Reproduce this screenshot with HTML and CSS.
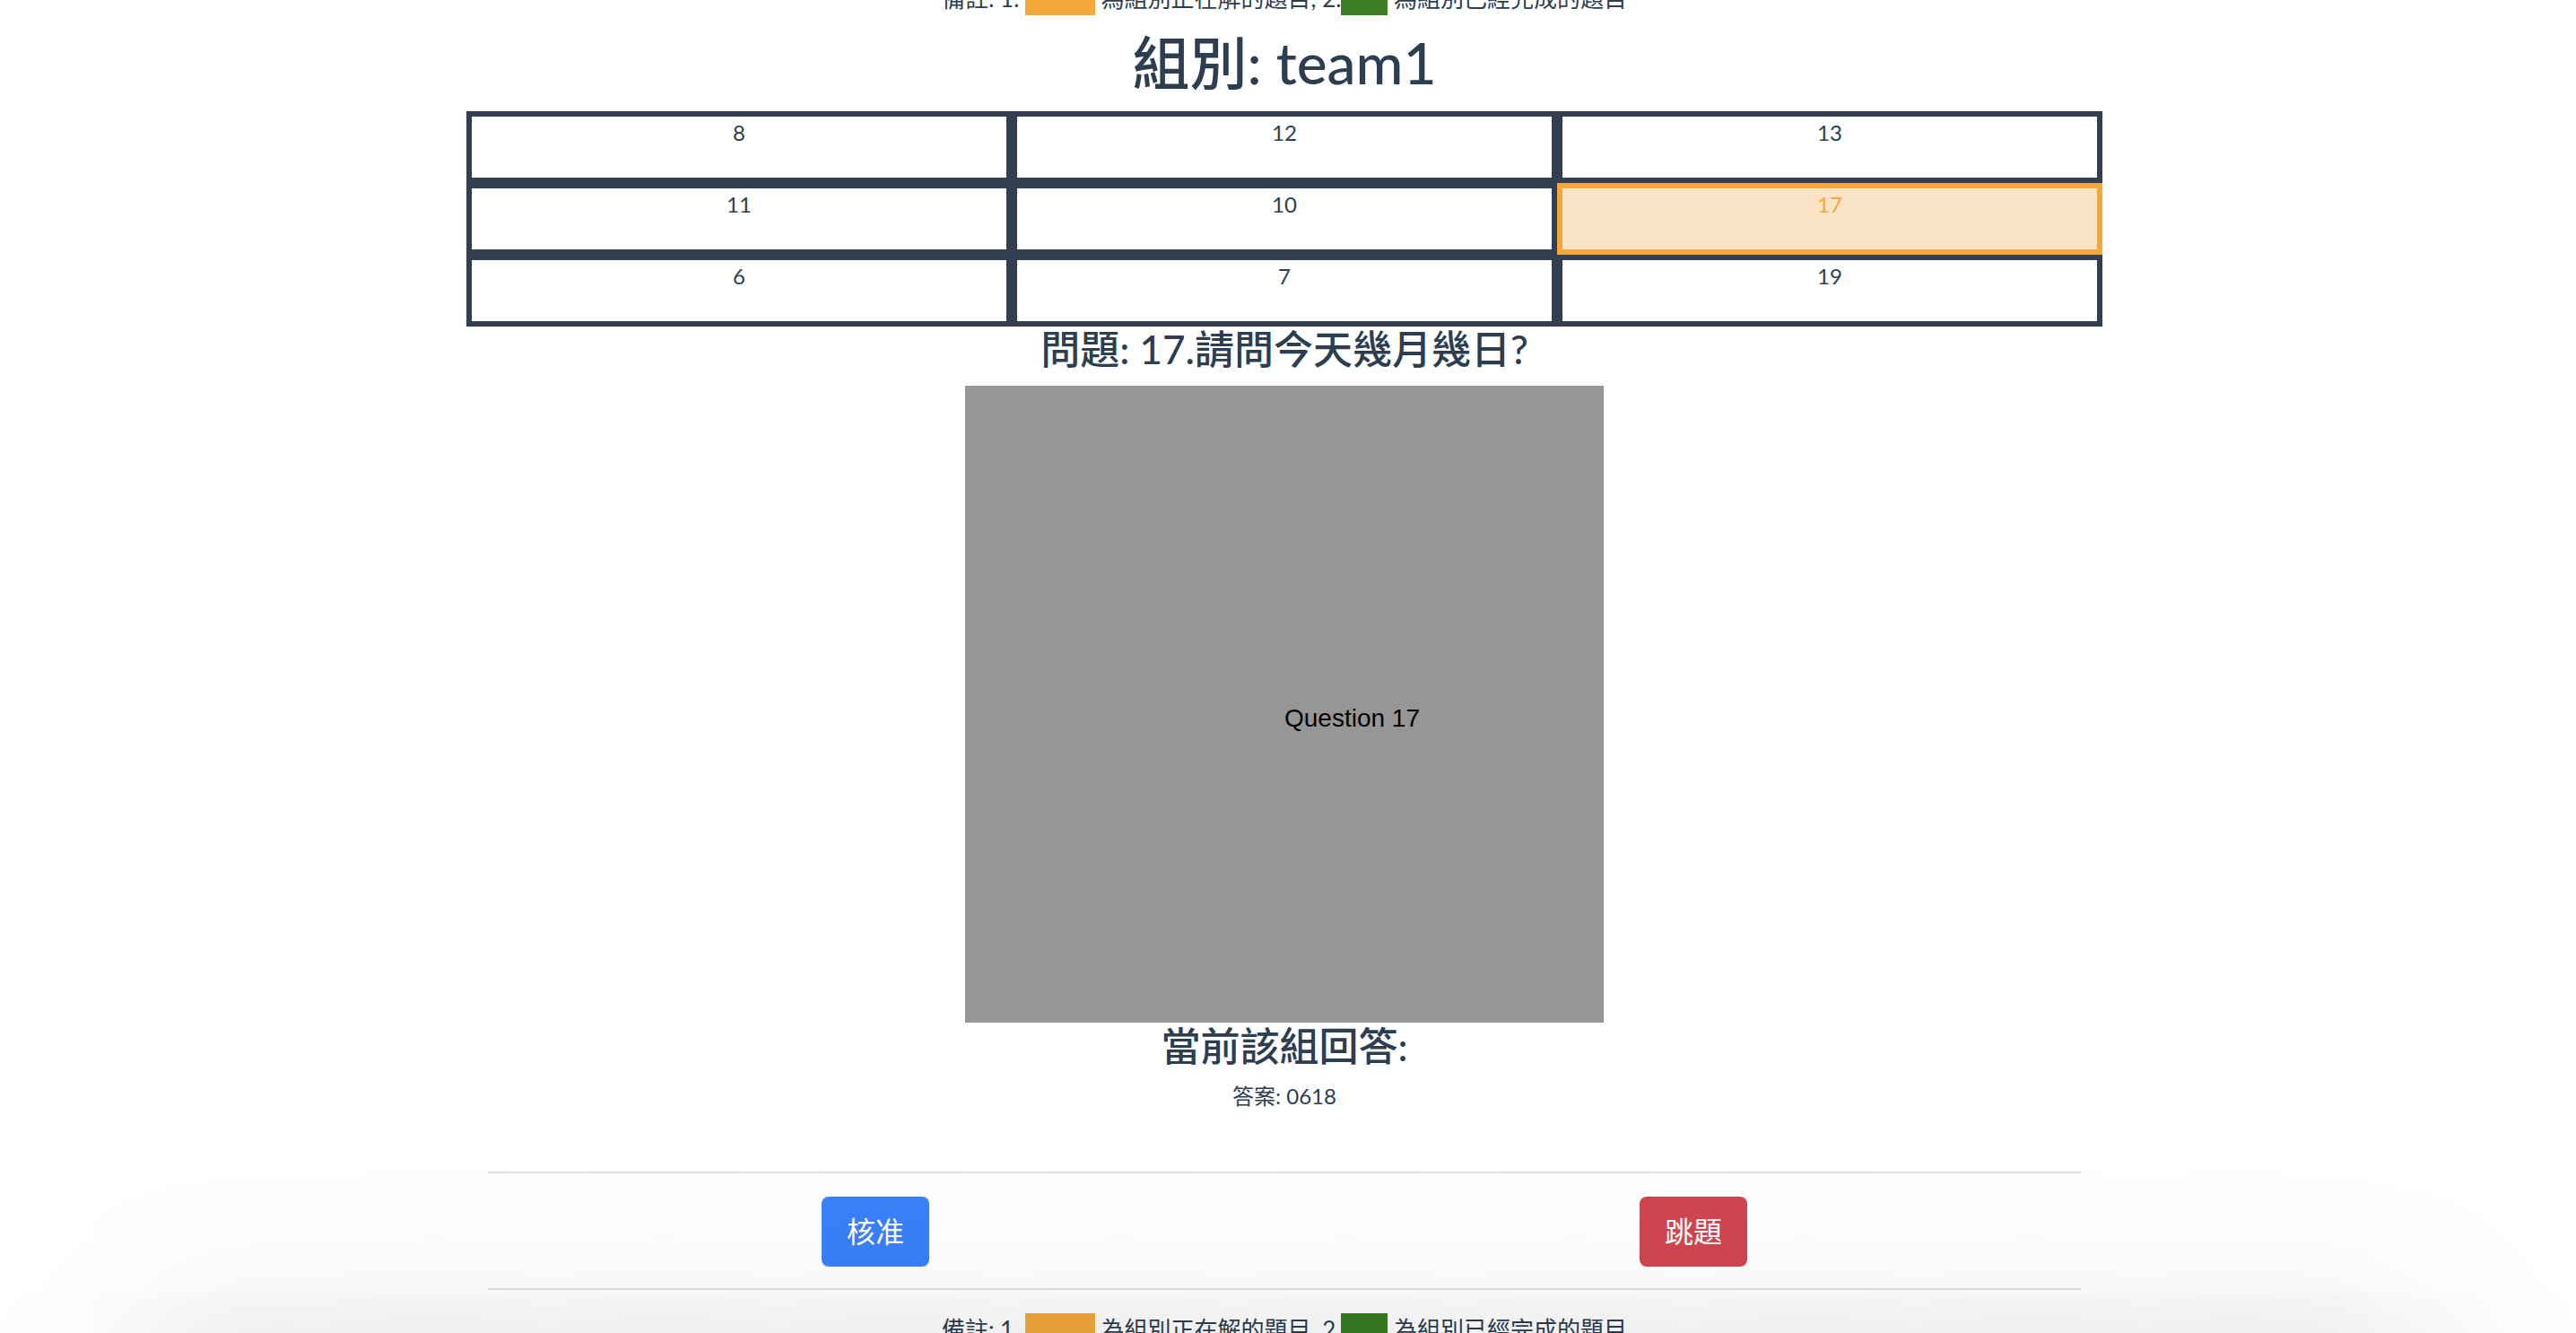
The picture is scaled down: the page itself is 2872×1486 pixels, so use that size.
FILE: index.html
```html
<!DOCTYPE html>
<html lang="zh-Hant">
<head>
<meta charset="utf-8">
<title>組別: team1</title>
<link rel="stylesheet" href="styles.css">
</head>
<body>
<div class="app">
  <p class="legend legend-top">備註: 1. <span class="swatch swatch-doing"></span> 為組別正在解的題目, 2.<span class="swatch swatch-done"></span> 為組別已經完成的題目</p>
  <h1 class="team">組別: team1</h1>
  <table class="board">
    <tr><td>8</td><td>12</td><td>13</td></tr>
    <tr><td>11</td><td>10</td><td class="active">17</td></tr>
    <tr><td>6</td><td>7</td><td>19</td></tr>
  </table>
  <h2 class="question">問題: 17.請問今天幾月幾日?</h2>
  <div class="qimg"><span>Question 17</span></div>
  <h2 class="answer-title">當前該組回答:</h2>
  <p class="answer">答案: 0618</p>
  <hr class="rule rule-first">
  <div class="actions">
    <button class="btn btn-approve">核准</button>
    <button class="btn btn-skip">跳題</button>
  </div>
  <hr class="rule rule-second">
  <p class="legend legend-bottom">備註: 1. <span class="swatch swatch-doing"></span> 為組別正在解的題目, 2.<span class="swatch swatch-done"></span> 為組別已經完成的題目</p>
</div>
<div class="bottom-shade"></div>
</body>
</html>
```

FILE: styles.css
```css
html, body {
  margin: 0;
  padding: 0;
  background: #ffffff;
  overflow: hidden;
}

.app {
  width: 2864px;
  text-align: center;
  color: #2c3e50;
  font-family: Lato, "Noto Sans CJK TC", sans-serif;
}

.legend {
  font-size: 26px;
  line-height: 38px;
  margin: 0;
  white-space: nowrap;
}

.legend-top {
  margin-top: -21px;
}

.legend-bottom {
  margin-top: 25px;
}

.swatch {
  display: inline-block;
  height: 37px;
  vertical-align: -9px;
}

.swatch-doing {
  width: 78px;
  background: #f4a93c;
}

.swatch-done {
  width: 52px;
  background: #3a7d23;
}

.team {
  font-size: 64px;
  font-weight: 500;
  line-height: 76.8px;
  margin: 15px 0 15px;
}

.board {
  width: 1824px;
  margin: 0 auto;
  border-collapse: separate;
  border-spacing: 0;
  table-layout: fixed;
}

.board td {
  border: 6px solid #333f50;
  height: 68px;
  padding: 0;
  vertical-align: top;
  font-size: 24px;
  line-height: 36px;
  color: #2c3e50;
  background: #ffffff;
}

.board td.active {
  border-color: #f3a73c;
  background: #fbe4c6;
  color: #f3a73c;
}

.question,
.answer-title {
  font-size: 44px;
  font-weight: 500;
  line-height: 50px;
  margin: 0;
}

.question {
  margin-bottom: 16px;
}

.qimg {
  box-sizing: border-box;
  width: 712px;
  height: 710px;
  margin: 0 auto;
  background: #969696;
  padding: 355px 0 0 356px;
  text-align: left;
  font-family: "Liberation Sans", Arial, sans-serif;
  font-size: 28px;
  line-height: 32px;
  color: #000000;
}

.answer-title {
  margin-top: 1px;
}

.answer {
  font-size: 24px;
  line-height: 36px;
  margin: 13px 0 0;
}

.rule {
  width: 1776px;
  height: 2px;
  border: 0;
  background: #e1e1e1;
  margin: 0 auto;
}

.rule-first {
  margin-top: 66px;
}

.actions {
  width: 1824px;
  margin: 26px auto 24px;
  display: grid;
  grid-template-columns: 1fr 1fr;
  justify-items: center;
}

.btn {
  font-family: Lato, "Noto Sans CJK TC", sans-serif;
  font-size: 32px;
  line-height: 48px;
  padding: 15px 28px;
  border: 0;
  border-radius: 8px;
  color: #ffffff;
}

.btn-approve {
  background: #3a80f9;
}

.btn-skip {
  background: #d04650;
}

.bottom-shade {
  position: fixed;
  left: 150px;
  right: 150px;
  bottom: -200px;
  height: 200px;
  box-shadow: 0 0 200px 0 rgba(0, 0, 0, 0.13);
  pointer-events: none;
}
```
